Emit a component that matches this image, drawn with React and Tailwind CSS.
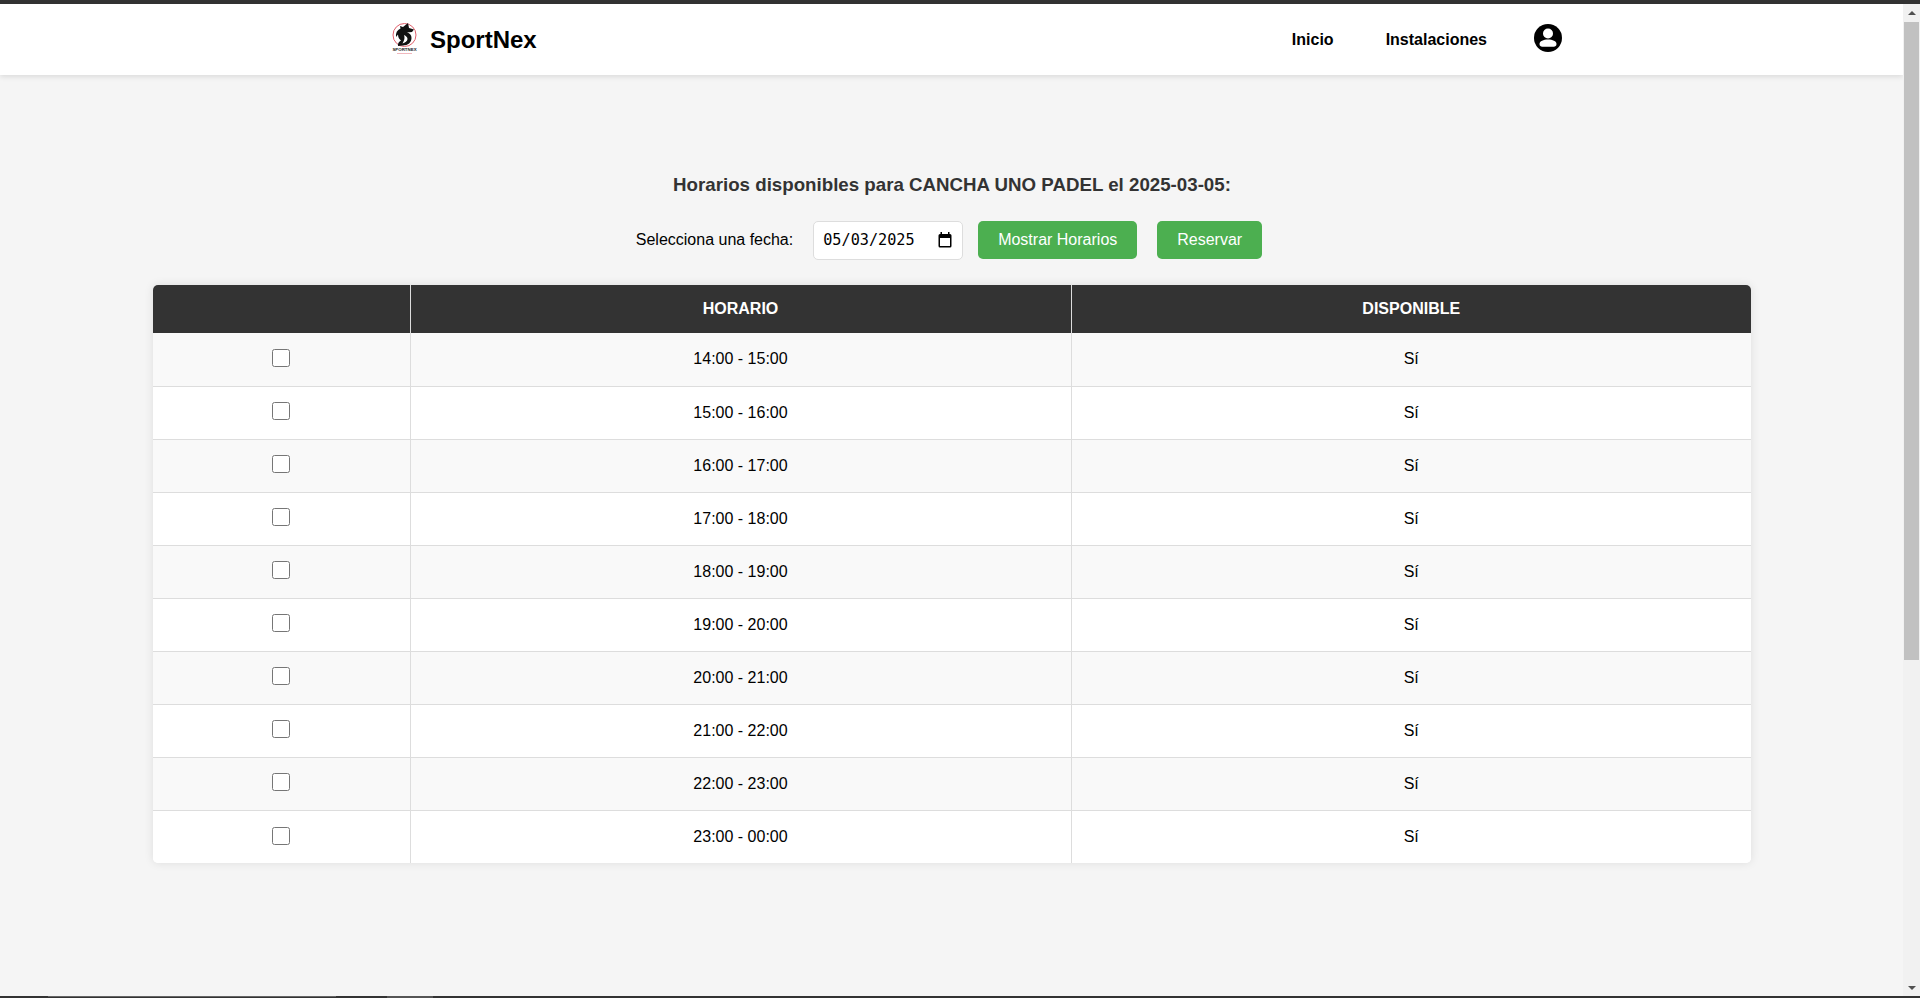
const rows = ["14:00 - 15:00","15:00 - 16:00","16:00 - 17:00","17:00 - 18:00","18:00 - 19:00","19:00 - 20:00","20:00 - 21:00","21:00 - 22:00","22:00 - 23:00","23:00 - 00:00"];

function Logo() {
  return (
    <svg width="30" height="38" viewBox="0 0 30 38" className="shrink-0">
      <circle cx="14.5" cy="14" r="11.5" fill="none" stroke="#e0606c" strokeWidth="1" />
      <path d="M18 2 L13 6 L10 5 L10.500 7.500 C7 9 5.500 12 6 16 L8 13.500 C8 16 9 18 11 19.500 C9 20.500 7.500 22.500 8 25 L13 24.500 C18 24.500 21.500 21.500 21.500 17 C21.500 14 20 12.500 17 11.500 L22 11 L24 8.500 L19 7 Z" fill="#111" />
      <path d="M14 14 C16 15 17.500 16 17.500 18 C17.500 20 15 21.500 12.500 22.500 C14.500 19 15 17 14 14Z" fill="#fff" />
      <text x="14.5" y="30" fontSize="4.4" fontWeight="700" textAnchor="middle" fill="#222" fontFamily="Liberation Sans, sans-serif">SPORTNEX</text>
      <rect x="7" y="32" width="15" height="1" fill="#f0b8be" />
    </svg>
  );
}

function UserIcon() {
  return (
    <svg width="28" height="28" viewBox="0 0 28 28">
      <circle cx="14" cy="14" r="14" fill="#000" />
      <circle cx="14" cy="9.500" r="5" fill="#fff" />
      <path d="M5.500 20 C5.500 17 9.500 15.500 14 15.500 C18.500 15.500 22.500 17 22.500 20 C22.500 21.700 21.300 22.800 19.700 22.800 L8.300 22.800 C6.700 22.800 5.500 21.700 5.500 20Z" fill="#fff" />
    </svg>
  );
}

function CalendarIcon() {
  return (
    <svg width="14" height="16" viewBox="0 0 14 16">
      <rect x="2.500" y="0" width="1.500" height="3" fill="#000" />
      <rect x="10" y="0" width="1.500" height="3" fill="#000" />
      <path d="M2 2 H12 A1.500 1.500 0 0 1 13.500 3.500 V14 A1.500 1.500 0 0 1 12 15.500 H2 A1.500 1.500 0 0 1 0.500 14 V3.500 A1.500 1.500 0 0 1 2 2 Z M2 6 V14 H12 V6 Z" fill="#000" fillRule="evenodd" />
    </svg>
  );
}

export default function App() {
  return (
    <div className="h-[998px] flex flex-col overflow-hidden bg-[#f5f5f5] font-['Liberation_Sans',Arial,sans-serif] text-[#000]">
      <div className="h-1 bg-[#333333] shrink-0" />
      <div className="flex-1 flex min-h-0">
        <div className="flex-1 min-w-0 flex flex-col">
          <header className="h-[71px] bg-white shadow-[0_2px_5px_rgba(0,0,0,0.1)] shrink-0 flex items-center pl-[390px] pr-[341px]">
            <Logo />
            <span className="ml-[10px] text-2xl font-bold">SportNex</span>
            <nav className="ml-auto flex items-center text-base font-bold">
              <span>Inicio</span>
              <span className="ml-[52px]">Instalaciones</span>
              <span className="ml-[47px] mb-[3px] flex"><UserIcon /></span>
            </nav>
          </header>
          <main className="flex-1 flex flex-col items-center pl-[153px] pr-[152px]">
            <h3 className="mt-[99px] text-[18.72px] leading-[22px] font-bold text-[#333333]">Horarios disponibles para CANCHA UNO PADEL el 2025-03-05:</h3>
            <div className="mt-[24px] mr-[6px] flex items-center text-base h-[40px]">
              <label>Selecciona una fecha:</label>
              <div className="ml-5 w-[150px] h-[39px] pl-[9px] pr-[10px] bg-white border border-[#dddddd] rounded-[5px] flex items-center justify-between">
                <span className="font-['DejaVu_Sans_Mono',monospace] text-[15.2px] text-black">05/03/2025</span>
                <CalendarIcon />
              </div>
              <button className="ml-[15px] h-[38px] w-[159px] bg-[#4caf50] text-white rounded-[5px] text-base">Mostrar Horarios</button>
              <button className="ml-5 h-[38px] w-[105px] bg-[#4caf50] text-white rounded-[5px] text-base">Reservar</button>
            </div>
            <div className="mt-[25px] w-[1598px] rounded-[5px] overflow-hidden bg-white shadow-[0_0_10px_rgba(0,0,0,0.1)]">
              <table className="w-full table-fixed border-collapse text-base text-center">
                <colgroup>
                  <col className="w-[257px]" />
                  <col className="w-[661px]" />
                  <col />
                </colgroup>
                <thead>
                  <tr className="h-[48px] bg-[#333333] text-white font-bold">
                    <th className="border-r border-[#dddddd]"></th>
                    <th className="border-r border-[#dddddd]">HORARIO</th>
                    <th>DISPONIBLE</th>
                  </tr>
                </thead>
                <tbody>
                  {rows.map((r, i) => (
                    <tr key={r} className={`h-[53px] ${i % 2 === 0 ? "bg-[#f9f9f9]" : "bg-white"} ${i < 9 ? "border-b border-[#dddddd]" : ""}`}>
                      <td className="border-r border-[#dddddd]"><input type="checkbox" className="w-[18px] h-[18px] align-middle relative -top-[2px]" /></td>
                      <td className="border-r border-[#dddddd]">{r}</td>
                      <td>Sí</td>
                    </tr>
                  ))}
                </tbody>
              </table>
            </div>
          </main>
        </div>
        <div className="w-[17px] shrink-0 bg-[#f1f1f1] flex flex-col items-center">
          <div className="h-[17px] w-full flex items-center justify-center">
            <div className="w-0 h-0 border-x-[4px] border-x-transparent border-b-[4px] border-b-[#505050]" />
          </div>
          <div className="mt-px w-[15px] h-[638px] bg-[#c1c1c1]" />
          <div className="mt-auto h-[17px] w-full flex items-center justify-center">
            <div className="w-0 h-0 border-x-[4px] border-x-transparent border-t-[4px] border-t-[#505050]" />
          </div>
        </div>
      </div>
      <div className="h-[2px] bg-[#333333] shrink-0 flex items-start">
        <div className="ml-[48px] w-[288px] h-px bg-[#666666]" />
        <div className="ml-[51px] w-[46px] h-[2px] bg-[#555555]" />
      </div>
    </div>
  );
}
